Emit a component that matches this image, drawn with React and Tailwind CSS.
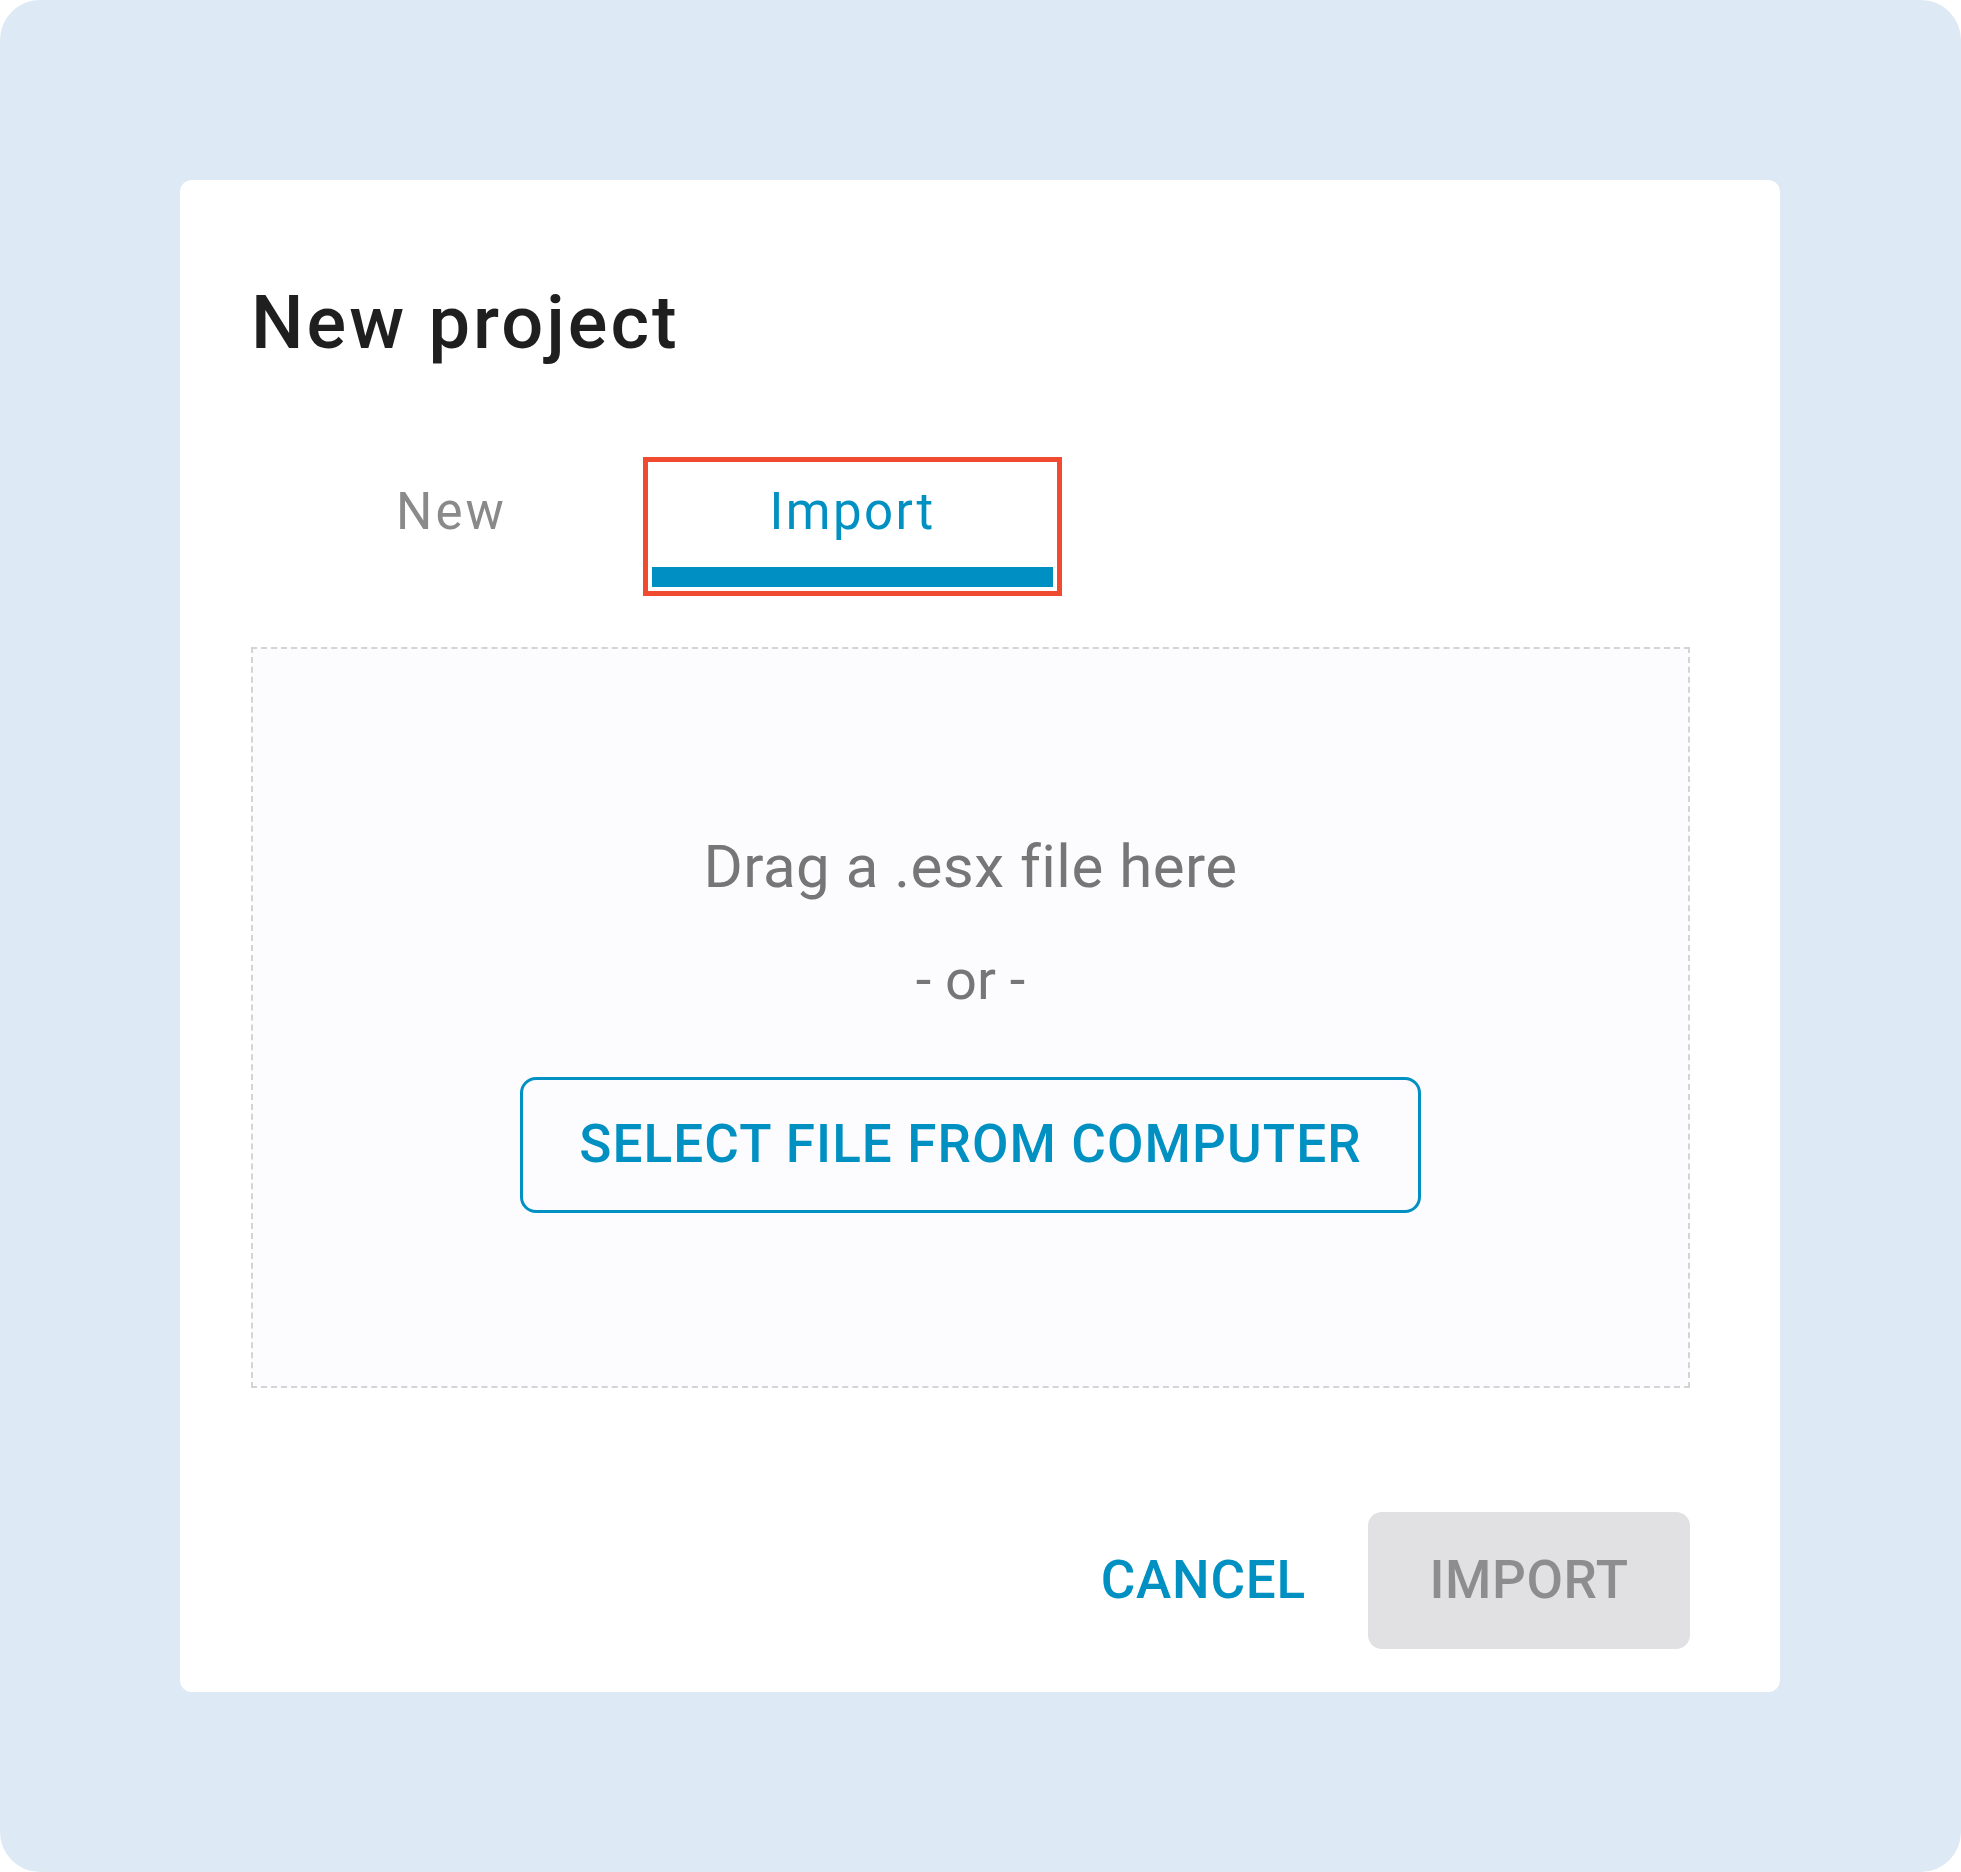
export default function App() {
  return (
    <div className="w-[1961px] h-[1872px] bg-white font-[Roboto,sans-serif]">
      <div className="w-full h-full rounded-[40px] bg-[#dde9f4] pt-[180px] pl-[180px]">
        <div className="w-[1600px] rounded-[12px] bg-white pt-[99px] pl-[71px] pr-[90px] pb-[43px]">
          <h2 className="text-[74px] leading-[88px] font-medium text-[#1f1f1f] tracking-[3px]">New project</h2>

          {/* tabs */}
          <div className="flex mt-[99px]">
            <button className="w-[401px] h-[121px] pt-[16px] flex flex-col items-center">
              <span className="text-[51px] leading-[60px] tracking-[3px] text-[#8a8a8a]">New</span>
            </button>
            <button className="w-[401px] h-[121px] pt-[16px] flex flex-col items-center outline-[5px] outline-solid outline-[#f04b30] outline-offset-[4px]">
              <span className="text-[51px] leading-[60px] tracking-[2.4px] text-[#0090c2]">Import</span>
              <span className="mt-[25px] w-full h-[20px] bg-[#008fc2]" />
            </button>
          </div>

          {/* drop zone */}
          <div className="mt-[60px] h-[741px] border-2 border-dashed border-[#d4d3d6] bg-[#fcfbfe] pt-[183px] flex flex-col items-center">
            <p className="text-[60px] leading-[70px] tracking-[0.5px] text-[#767676]">Drag a .esx file here</p>
            <p className="mt-[43px] text-[56px] leading-[70px] text-[#767676]">- or -</p>
            <button className="mt-[62px] w-[901px] h-[136px] rounded-[16px] border-[3px] border-[#0090c2] flex items-center justify-center text-[53px] font-medium tracking-[1.1px] text-[#0090c2]">
              SELECT FILE FROM COMPUTER
            </button>
          </div>

          {/* actions */}
          <div className="mt-[124px] flex justify-end">
            <button className="h-[137px] px-[62px] text-[53px] font-medium tracking-[0.8px] text-[#0090c2]">CANCEL</button>
            <button className="w-[322px] h-[137px] rounded-[14px] bg-[#e1e0e3] text-[53px] font-medium tracking-[0.6px] text-[#8d8c8f]">IMPORT</button>
          </div>
        </div>
      </div>
    </div>
  )
}
